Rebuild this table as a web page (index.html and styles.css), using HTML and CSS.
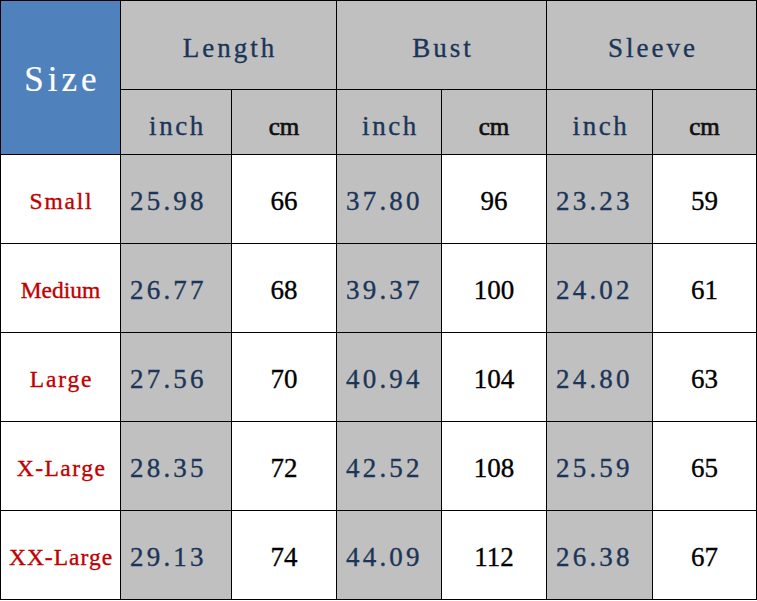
FILE: index.html
```html
<!DOCTYPE html>
<html>
<head>
<meta charset="utf-8">
<link rel="stylesheet" href="styles.css">
</head>
<body>
<table class="chart">
  <colgroup>
    <col class="c-size"><col class="c1"><col class="c2"><col class="c3"><col class="c4"><col class="c5"><col class="c6">
  </colgroup>
  <tr class="head">
    <td class="size" rowspan="2">Size</td>
    <td class="group" colspan="2">Length</td>
    <td class="group" colspan="2">Bust</td>
    <td class="group" colspan="2">Sleeve</td>
  </tr>
  <tr class="sub">
    <td class="unit inch">inch</td><td class="unit cm">cm</td>
    <td class="unit inch">inch</td><td class="unit cm">cm</td>
    <td class="unit inch">inch</td><td class="unit cm">cm</td>
  </tr>
  <tr class="row">
    <td class="label ls-s">Small</td>
    <td class="in">25.98</td><td class="cmv">66</td>
    <td class="in">37.80</td><td class="cmv">96</td>
    <td class="in">23.23</td><td class="cmv">59</td>
  </tr>
  <tr class="row">
    <td class="label ls-m">Medium</td>
    <td class="in">26.77</td><td class="cmv">68</td>
    <td class="in">39.37</td><td class="cmv">100</td>
    <td class="in">24.02</td><td class="cmv">61</td>
  </tr>
  <tr class="row">
    <td class="label ls-l">Large</td>
    <td class="in">27.56</td><td class="cmv">70</td>
    <td class="in">40.94</td><td class="cmv">104</td>
    <td class="in">24.80</td><td class="cmv">63</td>
  </tr>
  <tr class="row">
    <td class="label ls-xl">X-Large</td>
    <td class="in">28.35</td><td class="cmv">72</td>
    <td class="in">42.52</td><td class="cmv">108</td>
    <td class="in">25.59</td><td class="cmv">65</td>
  </tr>
  <tr class="row">
    <td class="label ls-xxl">XX-Large</td>
    <td class="in">29.13</td><td class="cmv">74</td>
    <td class="in">44.09</td><td class="cmv">112</td>
    <td class="in">26.38</td><td class="cmv">67</td>
  </tr>
</table>
</body>
</html>
```

FILE: styles.css
```css
html, body {
  margin: 0;
  padding: 0;
  background: #ffffff;
}

.chart {
  border-collapse: separate;
  border-spacing: 1px;
  background: #000000;
  table-layout: fixed;
  width: 757px;
  font-family: "Liberation Serif", "Times New Roman", serif;
}

.c-size { width: 119px; }
.c1 { width: 110px; }
.c2 { width: 104px; }
.c3 { width: 104px; }
.c4 { width: 104px; }
.c5 { width: 105px; }
.c6 { width: 103px; }

.chart td {
  padding: 0;
  text-align: center;
  vertical-align: middle;
  line-height: 1;
  white-space: nowrap;
  -webkit-text-stroke: 0.35px currentColor;
}

.head td {
  height: 82px;
  padding-top: 6px;
}

.sub td {
  height: 56px;
  padding-top: 8px;
}

.row td {
  height: 83px;
  padding-top: 5px;
}

.chart .size {
  background: #4f81bd;
  color: #ffffff;
  font-size: 35px;
  letter-spacing: 4px;
  padding-left: 4px;
  padding-top: 4px;
  -webkit-text-stroke: 0.2px currentColor;
}

.chart .group {
  background: #c0c0c0;
  color: #1b3558;
  font-size: 27px;
  letter-spacing: 3px;
  padding-left: 3px;
}

.unit {
  background: #c0c0c0;
}

.chart .unit.inch {
  color: #1b3558;
  font-size: 27px;
  letter-spacing: 2.6px;
  padding-left: 3px;
}

.chart .unit.cm {
  color: #111111;
  font-size: 25px;
  letter-spacing: 0;
  -webkit-text-stroke: 0.7px currentColor;
}

.label {
  background: #ffffff;
  color: #c00000;
  font-size: 23.5px;
}

.chart .ls-s { letter-spacing: 1.8px; padding-left: 2px; }
.chart .ls-m { letter-spacing: 0; }
.chart .ls-l { letter-spacing: 1.8px; padding-left: 2px; }
.chart .ls-xl { letter-spacing: 1.5px; padding-left: 2px; }
.chart .ls-xxl { letter-spacing: 1px; padding-left: 1px; }

.chart .in {
  background: #c0c0c0;
  color: #1b3558;
  font-size: 27px;
  letter-spacing: 3.2px;
  text-align: left;
  padding-left: 9px;
}

.cmv {
  background: #ffffff;
  color: #000000;
  font-size: 27px;
}
```
